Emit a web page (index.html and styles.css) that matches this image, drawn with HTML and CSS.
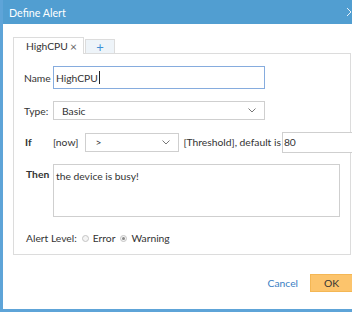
FILE: index.html
```html
<!DOCTYPE html>
<html>
<head>
  <meta charset="utf-8">
  <title>Define Alert</title>
  <link rel="stylesheet" href="styles.css">
</head>
<body>
<div class="dialog">
  <div class="titlebar">
    <span class="title">Define Alert</span>
    <svg class="win-close" width="4" height="8" viewBox="0 0 4 8"><line x1="0" y1="0" x2="4" y2="4" stroke="#e8f2fa" stroke-width="1"/><line x1="0" y1="8" x2="4" y2="4" stroke="#e8f2fa" stroke-width="1"/></svg>
  </div>

  <div class="main">
    <div class="tabs">
      <div class="tab active">HighCPU<span class="tab-close">&times;</span></div>
      <div class="tab add">+</div>
    </div>

    <div class="panel">
      <div class="row row-name">
        <span class="lbl">Name</span>
        <div class="field name focus">HighCPU<span class="caret"></span></div>
      </div>

      <div class="row row-type">
        <span class="lbl">Type:</span>
        <div class="field select type">Basic
          <svg class="chev" width="8" height="5" viewBox="0 0 8 5"><polyline points="0.5,0.5 4,4 7.5,0.5" fill="none" stroke="#777" stroke-width="1"/></svg>
        </div>
      </div>

      <div class="row row-if">
        <span class="lbl bold">If</span>
        <span class="txt">[now]</span>
        <div class="field select op">&gt;
          <svg class="chev" width="8" height="5" viewBox="0 0 8 5"><polyline points="0.5,0.5 4,4 7.5,0.5" fill="none" stroke="#777" stroke-width="1"/></svg>
        </div>
        <span class="txt thr">[Threshold], default is</span>
        <div class="field value">80</div>
      </div>

      <div class="row row-then">
        <span class="lbl bold">Then</span>
        <div class="field area">the device is busy!</div>
      </div>

      <div class="row row-level">
        <span class="txt">Alert Level:</span>
        <span class="radio"></span><span class="txt">Error</span>
        <span class="radio on"></span><span class="txt">Warning</span>
      </div>
    </div>
  </div>

  <div class="footer">
    <a class="cancel">Cancel</a>
    <button class="ok">OK</button>
  </div>
</div>
</body>
</html>
```

FILE: styles.css
```css
html, body { margin: 0; padding: 0; }
body {
  overflow: hidden;
  background: #fff;
  color: #333;
  font-family: "Lato", "Noto Sans", sans-serif;
  font-size: 10.3px;
}

.dialog {
  width: 352px;
  height: 312px;
  box-sizing: border-box;
  display: flex;
  flex-direction: column;
  overflow: hidden;
  border-left: 3px solid #5ea4d8;
  border-bottom: 3px solid #5ea4d8;
  background: #fff;
}

.titlebar {
  height: 24px;
  flex: none;
  margin-left: -3px;
  padding-left: 9px;
  display: flex;
  align-items: center;
  background: #519ed1;
  color: #fff;
  font-size: 10.7px;
}
.titlebar .title { flex: 1; }
.titlebar .win-close { margin-right: 1px; }

.main { padding: 13px 0 0 10px; white-space: nowrap; }

/* tabs */
.tabs { display: flex; align-items: flex-end; height: 16px; }
.tab {
  box-sizing: border-box;
  border: 1px solid #dcdcdc;
  border-bottom: none;
  display: flex;
  align-items: center;
}
.tab.active {
  width: 71px;
  height: 17px;
  margin-bottom: -1px;
  padding-left: 12px;
  background: #fff;
  position: relative;
  z-index: 1;
}
.tab-close { margin-left: 2px; color: #666; font-size: 12px; }
.tab.add {
  width: 30px;
  height: 14px;
  margin-left: 1px;
  justify-content: center;
  background: #eef4f9;
  color: #3d8fd6;
  font-size: 13px;
}

/* panel */
.panel {
  width: 338px;
  height: 202px;
  box-sizing: border-box;
  border: 1px solid #dcdcdc;
  padding: 12px 0 0 10px;
}

.row { display: flex; align-items: center; }
.lbl { width: 29px; flex: none; }
.bold { font-weight: bold; }

.field {
  box-sizing: border-box;
  flex: none;
  border: 1px solid #cfcfcf;
  background: #fff;
  display: flex;
  align-items: center;
  white-space: nowrap;
}
.field.focus { border-color: #86acde; }

.row-name { height: 23px; }
.field.name { width: 212px; height: 23px; padding-left: 2px; }
.caret { width: 1px; height: 13px; background: #222; margin-left: 1px; }

.row-type { height: 19px; margin-top: 12px; }
.field.select { justify-content: space-between; padding: 0 8px 0 8px; }
.field.type { width: 212px; height: 19px; }
.chev { flex: none; }

.row-if { height: 22px; margin-top: 11px; }
.row-if .lbl { padding-left: 1px; width: 28px; }
.field.op { width: 94px; height: 19px; margin-left: 7px; padding-left: 9px; }
.thr { margin-left: 4px; }
.field.value { width: 80px; height: 21px; margin-left: 1px; padding-left: 1px; }

.row-then { align-items: flex-start; margin-top: 11px; }
.row-then .lbl { padding: 4px 0 0 2px; width: 27px; }
.field.area {
  width: 287px;
  height: 53px;
  align-items: flex-start;
  padding: 5px 2px;
}

.row-level { margin-top: 13px; height: 16px; padding-left: 2px; }
.radio {
  width: 5px;
  height: 5px;
  border: 1px solid #c4c4c4;
  border-radius: 50%;
  margin: 0 4px 0 5px;
  box-sizing: content-box;
  background: #f4f4f4;
  position: relative;
}
.radio.on::after {
  content: "";
  position: absolute;
  left: 1px;
  top: 1px;
  width: 3px;
  height: 3px;
  border-radius: 50%;
  background: #888;
}

/* footer */
.footer {
  flex: 1;
  display: flex;
  justify-content: flex-end;
  align-items: center;
  padding-top: 1px;
}
.cancel { color: #3a80c3; margin-right: 12px; cursor: pointer; }
.ok {
  width: 42px;
  height: 18px;
  border: 1px solid #f4b755;
  border-right: none;
  background: #fcc46c;
  color: #333;
  font: inherit;
  padding: 0;
}
```
